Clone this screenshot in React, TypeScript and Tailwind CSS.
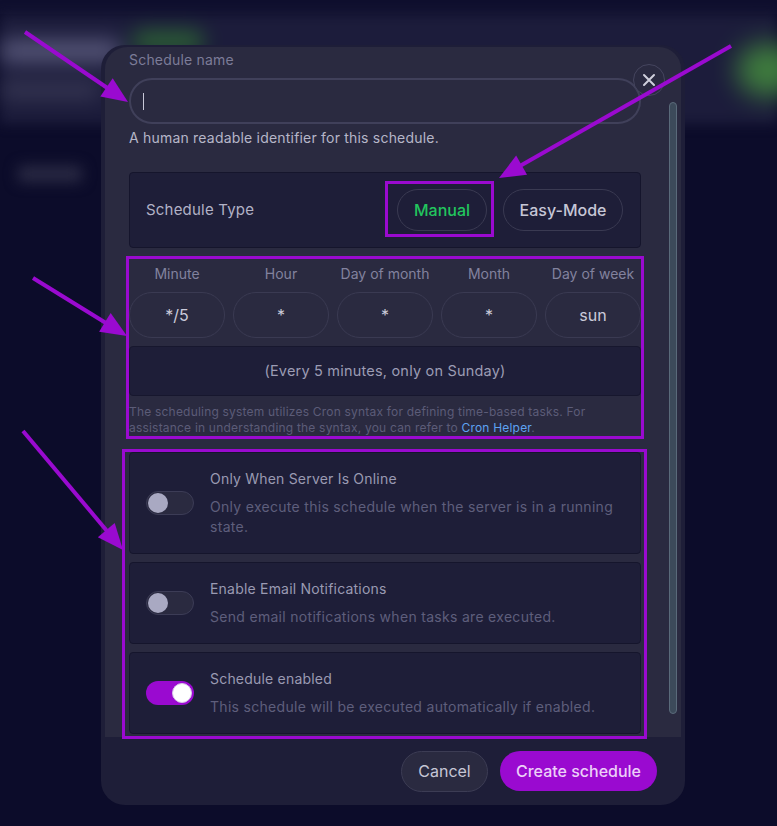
import React from "react";

const PURPLE = "#9a0ad0";

function arrowHead(x1: number, y1: number, x2: number, y2: number, len = 26, half = 11) {
  const dx = x2 - x1;
  const dy = y2 - y1;
  const l = Math.sqrt(dx * dx + dy * dy);
  const ux = dx / l;
  const uy = dy / l;
  const bx = x2 - ux * len;
  const by = y2 - uy * len;
  const px = -uy * half;
  const py = ux * half;
  return `${x2},${y2} ${bx + px},${by + py} ${bx - px},${by - py}`;
}

function Arrow({ x1, y1, x2, y2 }: { x1: number; y1: number; x2: number; y2: number }) {
  const dx = x2 - x1;
  const dy = y2 - y1;
  const l = Math.sqrt(dx * dx + dy * dy);
  const ex = x2 - (dx / l) * 20;
  const ey = y2 - (dy / l) * 20;
  return (
    <g>
      <line x1={x1} y1={y1} x2={ex} y2={ey} stroke={PURPLE} strokeWidth={4} />
      <polygon points={arrowHead(x1, y1, x2, y2)} fill={PURPLE} />
    </g>
  );
}

function Toggle({ on }: { on?: boolean }) {
  if (on) {
    return (
      <div className="flex h-6 w-12 shrink-0 items-center justify-end rounded-full bg-[#9a0ad0] px-[2px]">
        <div className="h-5 w-5 rounded-full border border-[#d8c8e8] bg-white" />
      </div>
    );
  }
  return (
    <div className="flex h-6 w-12 shrink-0 items-center rounded-full border border-[#3c3c56] bg-[#2a2a40] px-px">
      <div className="h-5 w-5 rounded-full bg-[#a9a9c2]" />
    </div>
  );
}

function OptionCard({ title, desc, on }: { title: string; desc: string; on?: boolean }) {
  return (
    <div className="flex items-center gap-4 rounded-[4px] border border-[#15152c] bg-[#1e1e38] p-4">
      <Toggle on={on} />
      <div className="flex flex-col gap-2">
        <div className="text-[14px] leading-5 tracking-[0.2px] text-[#9a9ab2]">{title}</div>
        <div className="text-[14px] leading-5 tracking-[0.3px] text-[#5e5e7c]">{desc}</div>
      </div>
    </div>
  );
}

export default function App() {
  const cron = [
    { label: "Minute", value: "*/5" },
    { label: "Hour", value: "*" },
    { label: "Day of month", value: "*" },
    { label: "Month", value: "*" },
    { label: "Day of week", value: "sun" },
  ];
  return (
    <div className="relative h-[826px] w-full overflow-hidden bg-[#0c0c2a] font-[Inter,sans-serif]">
      {/* blurred background page */}
      <div className="h-[14px] bg-[#0f0f2e]" />
      <div className="relative h-[110px] bg-[#1c1c3b] blur-[6px]">
        <div className="flex flex-col gap-5 pt-[26px]">
          <div className="flex items-center gap-3">
            <div className="h-[22px] w-[120px] rounded bg-[#58587a] blur-[9px]" />
            <div className="-mt-[20px] h-[18px] w-[72px] rounded-full bg-[#2f6a34] blur-[9px]" />
          </div>
          <div className="h-[16px] w-[100px] rounded bg-[#3a3a56] blur-[9px]" />
        </div>
        <div className="absolute right-[-24px] top-[30px] h-[52px] w-[64px] rounded-full bg-[#3f7d3e] blur-[12px]" />
      </div>
      <div className="ml-[18px] mt-[42px] h-[16px] w-[64px] rounded bg-[#2a2a44] blur-[7px]" />

      {/* modal */}
      <div className="absolute left-[101px] top-[45px] flex h-[760px] w-[584px] flex-col rounded-[24px] bg-[#1e1e38] px-1 pt-[2px]">
        <div className="relative h-[690px] overflow-hidden rounded-t-[22px] bg-[#2a2a40]">
          <div className="flex flex-col pl-[24px] pr-[40px] pt-[3px]">
            <div className="text-[14px] leading-5 tracking-[0.2px] text-[#7c7c98]">Schedule name</div>
            <div className="mt-2 flex h-[46px] items-center rounded-full border-2 border-[#40405a] px-[12px]">
              <div className="h-[17px] w-px bg-[#c8c8d8]" />
            </div>
            <div className="mt-1 text-[14px] leading-5 tracking-[0.2px] text-[#b6b6c8]">
              A human readable identifier for this schedule.
            </div>

            <div className="mt-6 flex h-[76px] items-center justify-between rounded-[4px] border border-[#15152c] bg-[#1e1e38] pl-4 pr-[17px]">
              <div className="text-[15px] tracking-[0.2px] text-[#b2b2c6]">Schedule Type</div>
              <div className="flex gap-4">
                <div className="flex h-[42px] w-[90px] items-center justify-center rounded-full border border-[#3a3a52] text-[16px] font-medium text-[#22c55e]">
                  Manual
                </div>
                <div className="flex h-[42px] w-[120px] items-center justify-center rounded-full border border-[#3a3a52] text-[16px] font-medium text-[#c6c6d6]">
                  Easy-Mode
                </div>
              </div>
            </div>

            <div className="mt-4 grid grid-cols-5 gap-x-2 gap-y-2">
              {cron.map((c) => (
                <div key={c.label} className="text-center text-[14px] leading-5 text-[#82829e]">
                  {c.label}
                </div>
              ))}
              {cron.map((c) => (
                <div
                  key={c.label + "v"}
                  className="flex h-[46px] items-center justify-center rounded-full border border-[#3a3a52] text-[16px] text-[#cacada]"
                >
                  {c.value}
                </div>
              ))}
            </div>
            <div className="mt-2 flex h-[50px] items-center justify-center rounded-[4px] border border-[#17172e] bg-[#1e1e38] text-[14.5px] tracking-[0.2px] text-[#9c9cb4]">
              (Every 5 minutes, only on Sunday)
            </div>
            <p className="mt-2 text-[12px] leading-4 tracking-[0.2px] text-[#5c5c78]">
              <span>The scheduling system utilizes Cron syntax for defining time-based tasks. For assistance in understanding the syntax, you can refer to </span>
              <span className="text-[#5ea2f2]">Cron Helper</span>
              <span>.</span>
            </p>

            <div className="mt-4 flex flex-col gap-[8px]">
              <OptionCard
                title="Only When Server Is Online"
                desc="Only execute this schedule when the server is in a running state."
              />
              <OptionCard title="Enable Email Notifications" desc="Send email notifications when tasks are executed." />
              <OptionCard title="Schedule enabled" desc="This schedule will be executed automatically if enabled." on />
            </div>
          </div>

          {/* scrollbar */}
          <div className="absolute right-[4px] top-[55px] h-[612px] w-[8px] rounded-full border-[1.5px] border-[#5a6a7a] bg-[#3c4a5a]" />
        </div>

        {/* footer */}
        <div className="flex flex-1 items-center justify-end gap-3 pr-[24px]">
          <div className="flex h-[41px] w-[87px] items-center justify-center rounded-full border border-[#3c3c54] bg-[#2a2a40] text-[16px] text-[#c6c6d6]">
            Cancel
          </div>
          <div className="flex h-[40px] w-[157px] items-center justify-center rounded-full bg-[#9a0ad0] text-[16px] font-medium text-[#ecd0f8]">
            Create schedule
          </div>
        </div>

        {/* close button */}
        <div className="absolute right-[20px] top-[19px] flex h-8 w-8 items-center justify-center rounded-full border border-[#45455e] bg-[#2a2a40]">
          <svg width="14" height="14" viewBox="0 0 14 14">
            <path d="M2 2 L12 12 M12 2 L2 12" stroke="#cfcfdc" strokeWidth="2" strokeLinecap="round" />
          </svg>
        </div>
      </div>

      {/* annotations */}
      <svg className="pointer-events-none absolute left-0 top-0" width="777" height="826" viewBox="0 0 777 826">
        <rect x="386.5" y="182.5" width="106" height="53" fill="none" stroke={PURPLE} strokeWidth="3" />
        <rect x="127.5" y="257.5" width="515" height="180" fill="none" stroke={PURPLE} strokeWidth="3" />
        <rect x="123.5" y="450.5" width="522" height="287" fill="none" stroke={PURPLE} strokeWidth="3" />
        <Arrow x1={25} y1={32} x2={128} y2={102} />
        <Arrow x1={731} y1={46} x2={499} y2={178} />
        <Arrow x1={33} y1={278} x2={127} y2={336} />
        <Arrow x1={23} y1={431} x2={123} y2={550} />
      </svg>
    </div>
  );
}
